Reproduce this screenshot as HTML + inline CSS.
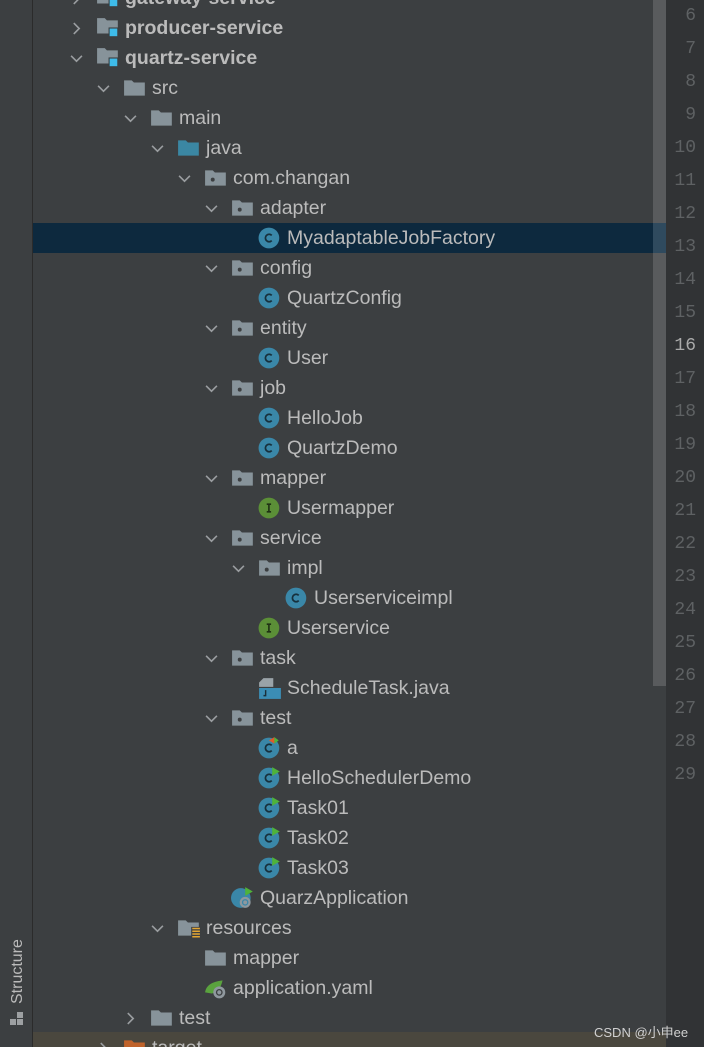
<!DOCTYPE html>
<html style="overflow:hidden;height:1047px"><head><meta charset="utf-8"><style>
*{margin:0;padding:0;box-sizing:border-box}
body{width:704px;height:1047px;background:#3c3f41;position:relative;overflow:hidden;font-family:"Liberation Sans","Noto Sans CJK SC",sans-serif;color:#bbbbbb}
.r{position:absolute;left:33px;width:620px;height:30px}
.sel{background:#0d293e}
.a{position:absolute;top:9px;width:13px;height:13px}
.i{position:absolute;top:4px;width:24px;height:22px}
.t{position:absolute;top:3px;font-size:19.5px;line-height:24px;white-space:nowrap}
.b{font-weight:bold}
.ln{position:absolute;right:8px;font-family:"Liberation Mono",monospace;font-size:18px;color:#5e6163;line-height:20px}
</style></head><body>
<svg width="0" height="0" style="position:absolute">
<defs>
<symbol id="down" viewBox="0 0 12 12"><path d="M1 3.5l5 5 5-5" fill="none" stroke="#9a9da0" stroke-width="1.5"/></symbol>
<symbol id="right" viewBox="0 0 12 12"><path d="M3.5 1l5 5-5 5" fill="none" stroke="#9a9da0" stroke-width="1.5"/></symbol>
<symbol id="fold" viewBox="0 0 22 20"><path d="M1 3h7l2 2h10v12H1z" fill="#87939a"/></symbol>
<symbol id="jfold" viewBox="0 0 22 20"><path d="M1 3h7l2 2h10v12H1z" fill="#3b87a3"/></symbol>
<symbol id="ofold" viewBox="0 0 22 20"><path d="M1 3h7l2 2h10v12H1z" fill="#c0632b"/></symbol>
<symbol id="pkg" viewBox="0 0 22 20"><path d="M1 3h7l2 2h10v12H1z" fill="#87939a"/><circle cx="8" cy="11.5" r="1.8" fill="#3c3f41"/></symbol>
<symbol id="mod" viewBox="0 0 22 20"><path d="M1 1h7l2 2h10v12H1z" fill="#87939a"/><rect x="12" y="10" width="8" height="8" fill="#3ebbe9" stroke="#3c3f41" stroke-width="1"/></symbol>
<symbol id="res" viewBox="0 0 22 20"><path d="M1 3h7l2 2h10v12H1z" fill="#87939a"/><rect x="13" y="9" width="8" height="10" fill="#3c3f41"/><path d="M14 10.5h7M14 13h7M14 15.5h7M14 18h7" stroke="#e3a633" stroke-width="1.4"/></symbol>
<symbol id="cls" viewBox="0 0 22 20"><circle cx="10" cy="10" r="9.5" fill="#3a87a8"/><path d="M12.6 7.6A3.4 3.4 0 1 0 12.6 12.4" fill="none" stroke="#17303c" stroke-width="1.6"/></symbol>
<symbol id="run" viewBox="0 0 22 20"><circle cx="10" cy="10" r="9.5" fill="#3a87a8"/><path d="M12.6 7.6A3.4 3.4 0 1 0 12.6 12.4" fill="none" stroke="#17303c" stroke-width="1.6"/><path d="M13 0l7 4-7 4z" fill="#4fb33a"/></symbol>
<symbol id="runa" viewBox="0 0 22 20"><circle cx="10" cy="10" r="9.5" fill="#3a87a8"/><path d="M12.6 7.6A3.4 3.4 0 1 0 12.6 12.4" fill="none" stroke="#17303c" stroke-width="1.6"/><path d="M10 3l5-3v6z" fill="#e05a2a"/><path d="M15 0l4 3-4 3z" fill="#4fb33a"/></symbol>
<symbol id="boot" viewBox="0 0 22 20"><circle cx="9" cy="10" r="9" fill="#3a87a8"/><path d="M13 0l7 4-7 4z" fill="#4fb33a"/><circle cx="13" cy="14" r="5" fill="#8f989e"/><circle cx="13" cy="14" r="2.4" fill="none" stroke="#3a87a8" stroke-width="1.2"/></symbol>
<symbol id="iface" viewBox="0 0 22 20"><circle cx="10" cy="10" r="9.5" fill="#5b8f37"/><path d="M8 6.5h4M10 6.5v7M8 13.5h4" stroke="#1f3214" stroke-width="1.5"/></symbol>
<symbol id="java" viewBox="0 0 22 20"><path d="M5 1h9v8H1V5z" fill="#9aa3a8"/><rect x="1" y="10" width="20" height="10" fill="#3b8db5"/><path d="M7 12v5H5" fill="none" stroke="#1a2f3a" stroke-width="1.3"/></symbol>
<symbol id="yaml" viewBox="0 0 22 20"><path d="M1 14C2 6 10 4 17 3c-1 5-4 11-10 12z" fill="#5aa33e"/><circle cx="14" cy="14" r="5.5" fill="#8f989e"/><circle cx="14" cy="14" r="2.5" fill="none" stroke="#3c3f41" stroke-width="1.2"/></symbol>
</defs></svg>

<div style="position:absolute;left:32px;top:0;width:1px;height:1047px;background:#2b2b2b"></div>
<div style="position:absolute;left:653px;top:0;width:13px;height:686px;background:#595b5d"></div>
<div style="position:absolute;left:653px;top:223px;width:13px;height:30px;background:#2f4a5e"></div>
<div style="position:absolute;left:666px;top:0;width:38px;height:1047px;background:#313335"></div>
<div style="position:absolute;left:33px;top:1032px;width:633px;height:15px;background:#4a473e"></div>

<div class="r" style="top:-17px"><svg class="a" style="left:37px"><use href="#right"/></svg><svg class="i" style="left:63px"><use href="#mod"/></svg><span class="t b" style="left:92px">gateway-service</span></div>
<div class="r" style="top:13px"><svg class="a" style="left:37px"><use href="#right"/></svg><svg class="i" style="left:63px"><use href="#mod"/></svg><span class="t b" style="left:92px">producer-service</span></div>
<div class="r" style="top:43px"><svg class="a" style="left:37px"><use href="#down"/></svg><svg class="i" style="left:63px"><use href="#mod"/></svg><span class="t b" style="left:92px">quartz-service</span></div>
<div class="r" style="top:73px"><svg class="a" style="left:64px"><use href="#down"/></svg><svg class="i" style="left:90px"><use href="#fold"/></svg><span class="t" style="left:119px">src</span></div>
<div class="r" style="top:103px"><svg class="a" style="left:91px"><use href="#down"/></svg><svg class="i" style="left:117px"><use href="#fold"/></svg><span class="t" style="left:146px">main</span></div>
<div class="r" style="top:133px"><svg class="a" style="left:118px"><use href="#down"/></svg><svg class="i" style="left:144px"><use href="#jfold"/></svg><span class="t" style="left:173px">java</span></div>
<div class="r" style="top:163px"><svg class="a" style="left:145px"><use href="#down"/></svg><svg class="i" style="left:171px"><use href="#pkg"/></svg><span class="t" style="left:200px">com.changan</span></div>
<div class="r" style="top:193px"><svg class="a" style="left:172px"><use href="#down"/></svg><svg class="i" style="left:198px"><use href="#pkg"/></svg><span class="t" style="left:227px">adapter</span></div>
<div class="r sel" style="top:223px"><svg class="i" style="left:225px"><use href="#cls"/></svg><span class="t" style="left:254px">MyadaptableJobFactory</span></div>
<div class="r" style="top:253px"><svg class="a" style="left:172px"><use href="#down"/></svg><svg class="i" style="left:198px"><use href="#pkg"/></svg><span class="t" style="left:227px">config</span></div>
<div class="r" style="top:283px"><svg class="i" style="left:225px"><use href="#cls"/></svg><span class="t" style="left:254px">QuartzConfig</span></div>
<div class="r" style="top:313px"><svg class="a" style="left:172px"><use href="#down"/></svg><svg class="i" style="left:198px"><use href="#pkg"/></svg><span class="t" style="left:227px">entity</span></div>
<div class="r" style="top:343px"><svg class="i" style="left:225px"><use href="#cls"/></svg><span class="t" style="left:254px">User</span></div>
<div class="r" style="top:373px"><svg class="a" style="left:172px"><use href="#down"/></svg><svg class="i" style="left:198px"><use href="#pkg"/></svg><span class="t" style="left:227px">job</span></div>
<div class="r" style="top:403px"><svg class="i" style="left:225px"><use href="#cls"/></svg><span class="t" style="left:254px">HelloJob</span></div>
<div class="r" style="top:433px"><svg class="i" style="left:225px"><use href="#cls"/></svg><span class="t" style="left:254px">QuartzDemo</span></div>
<div class="r" style="top:463px"><svg class="a" style="left:172px"><use href="#down"/></svg><svg class="i" style="left:198px"><use href="#pkg"/></svg><span class="t" style="left:227px">mapper</span></div>
<div class="r" style="top:493px"><svg class="i" style="left:225px"><use href="#iface"/></svg><span class="t" style="left:254px">Usermapper</span></div>
<div class="r" style="top:523px"><svg class="a" style="left:172px"><use href="#down"/></svg><svg class="i" style="left:198px"><use href="#pkg"/></svg><span class="t" style="left:227px">service</span></div>
<div class="r" style="top:553px"><svg class="a" style="left:199px"><use href="#down"/></svg><svg class="i" style="left:225px"><use href="#pkg"/></svg><span class="t" style="left:254px">impl</span></div>
<div class="r" style="top:583px"><svg class="i" style="left:252px"><use href="#cls"/></svg><span class="t" style="left:281px">Userserviceimpl</span></div>
<div class="r" style="top:613px"><svg class="i" style="left:225px"><use href="#iface"/></svg><span class="t" style="left:254px">Userservice</span></div>
<div class="r" style="top:643px"><svg class="a" style="left:172px"><use href="#down"/></svg><svg class="i" style="left:198px"><use href="#pkg"/></svg><span class="t" style="left:227px">task</span></div>
<div class="r" style="top:673px"><svg class="i" style="left:225px"><use href="#java"/></svg><span class="t" style="left:254px">ScheduleTask.java</span></div>
<div class="r" style="top:703px"><svg class="a" style="left:172px"><use href="#down"/></svg><svg class="i" style="left:198px"><use href="#pkg"/></svg><span class="t" style="left:227px">test</span></div>
<div class="r" style="top:733px"><svg class="i" style="left:225px"><use href="#runa"/></svg><span class="t" style="left:254px">a</span></div>
<div class="r" style="top:763px"><svg class="i" style="left:225px"><use href="#run"/></svg><span class="t" style="left:254px">HelloSchedulerDemo</span></div>
<div class="r" style="top:793px"><svg class="i" style="left:225px"><use href="#run"/></svg><span class="t" style="left:254px">Task01</span></div>
<div class="r" style="top:823px"><svg class="i" style="left:225px"><use href="#run"/></svg><span class="t" style="left:254px">Task02</span></div>
<div class="r" style="top:853px"><svg class="i" style="left:225px"><use href="#run"/></svg><span class="t" style="left:254px">Task03</span></div>
<div class="r" style="top:883px"><svg class="i" style="left:198px"><use href="#boot"/></svg><span class="t" style="left:227px">QuarzApplication</span></div>
<div class="r" style="top:913px"><svg class="a" style="left:118px"><use href="#down"/></svg><svg class="i" style="left:144px"><use href="#res"/></svg><span class="t" style="left:173px">resources</span></div>
<div class="r" style="top:943px"><svg class="i" style="left:171px"><use href="#fold"/></svg><span class="t" style="left:200px">mapper</span></div>
<div class="r" style="top:973px"><svg class="i" style="left:171px"><use href="#yaml"/></svg><span class="t" style="left:200px">application.yaml</span></div>
<div class="r" style="top:1003px"><svg class="a" style="left:91px"><use href="#right"/></svg><svg class="i" style="left:117px"><use href="#fold"/></svg><span class="t" style="left:146px">test</span></div>
<div class="r" style="top:1033px"><svg class="a" style="left:64px"><use href="#right"/></svg><svg class="i" style="left:90px"><use href="#ofold"/></svg><span class="t" style="left:119px">target</span></div>

<div class="ln" style="top:6px">6</div>
<div class="ln" style="top:39px">7</div>
<div class="ln" style="top:72px">8</div>
<div class="ln" style="top:105px">9</div>
<div class="ln" style="top:138px">10</div>
<div class="ln" style="top:171px">11</div>
<div class="ln" style="top:204px">12</div>
<div class="ln" style="top:237px">13</div>
<div class="ln" style="top:270px">14</div>
<div class="ln" style="top:303px">15</div>
<div class="ln" style="top:336px;color:#a9a9a9">16</div>
<div class="ln" style="top:369px">17</div>
<div class="ln" style="top:402px">18</div>
<div class="ln" style="top:435px">19</div>
<div class="ln" style="top:468px">20</div>
<div class="ln" style="top:501px">21</div>
<div class="ln" style="top:534px">22</div>
<div class="ln" style="top:567px">23</div>
<div class="ln" style="top:600px">24</div>
<div class="ln" style="top:633px">25</div>
<div class="ln" style="top:666px">26</div>
<div class="ln" style="top:699px">27</div>
<div class="ln" style="top:732px">28</div>
<div class="ln" style="top:765px">29</div>

<div style="position:absolute;left:9px;top:1004px;transform-origin:0 0;transform:rotate(-90deg);font-size:16px;color:#bbbbbb;white-space:nowrap;line-height:18px">Structure</div>
<div style="position:absolute;left:10px;top:1019px;width:6px;height:6px;background:#9da0a2"></div>
<div style="position:absolute;left:17px;top:1019px;width:6px;height:6px;background:#9da0a2"></div>
<div style="position:absolute;left:17px;top:1012px;width:6px;height:6px;background:#9da0a2"></div>

<div style="position:absolute;left:594px;top:1022px;font-size:13px;color:#d0d0d0;white-space:nowrap">CSDN @小申ee</div>
</body></html>
